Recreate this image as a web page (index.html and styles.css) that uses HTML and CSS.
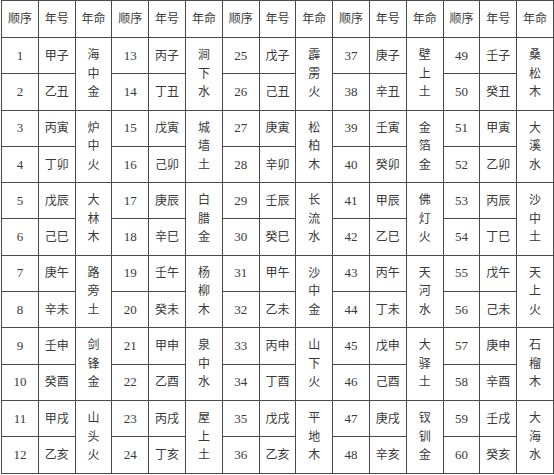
FILE: index.html
```html
<!DOCTYPE html>
<html lang="zh">
<head>
<meta charset="utf-8">
<title>六十甲子纳音表</title>
<link rel="stylesheet" href="styles.css">
</head>
<body>
<table class="nayin">
  <colgroup>
    <col><col><col><col><col><col><col><col><col><col><col><col><col><col><col>
  </colgroup>
  <thead>
    <tr class="head">
      <th>顺序</th><th>年号</th><th>年命</th>
      <th>顺序</th><th>年号</th><th>年命</th>
      <th>顺序</th><th>年号</th><th>年命</th>
      <th>顺序</th><th>年号</th><th>年命</th>
      <th>顺序</th><th>年号</th><th>年命</th>
    </tr>
  </thead>
  <tbody>
    <tr>
      <td class="num">1</td><td>甲子</td><td class="ming" rowspan="2">海<br>中<br>金</td>
      <td class="num">13</td><td>丙子</td><td class="ming" rowspan="2">涧<br>下<br>水</td>
      <td class="num">25</td><td>戊子</td><td class="ming" rowspan="2">霹<br>雳<br>火</td>
      <td class="num">37</td><td>庚子</td><td class="ming" rowspan="2">壁<br>上<br>土</td>
      <td class="num">49</td><td>壬子</td><td class="ming" rowspan="2">桑<br>松<br>木</td>
    </tr>
    <tr>
      <td class="num">2</td><td>乙丑</td>
      <td class="num">14</td><td>丁丑</td>
      <td class="num">26</td><td>己丑</td>
      <td class="num">38</td><td>辛丑</td>
      <td class="num">50</td><td>癸丑</td>
    </tr>
    <tr>
      <td class="num">3</td><td>丙寅</td><td class="ming" rowspan="2">炉<br>中<br>火</td>
      <td class="num">15</td><td>戊寅</td><td class="ming" rowspan="2">城<br>墙<br>土</td>
      <td class="num">27</td><td>庚寅</td><td class="ming" rowspan="2">松<br>柏<br>木</td>
      <td class="num">39</td><td>壬寅</td><td class="ming" rowspan="2">金<br>箔<br>金</td>
      <td class="num">51</td><td>甲寅</td><td class="ming" rowspan="2">大<br>溪<br>水</td>
    </tr>
    <tr>
      <td class="num">4</td><td>丁卯</td>
      <td class="num">16</td><td>己卯</td>
      <td class="num">28</td><td>辛卯</td>
      <td class="num">40</td><td>癸卯</td>
      <td class="num">52</td><td>乙卯</td>
    </tr>
    <tr>
      <td class="num">5</td><td>戊辰</td><td class="ming" rowspan="2">大<br>林<br>木</td>
      <td class="num">17</td><td>庚辰</td><td class="ming" rowspan="2">白<br>腊<br>金</td>
      <td class="num">29</td><td>壬辰</td><td class="ming" rowspan="2">长<br>流<br>水</td>
      <td class="num">41</td><td>甲辰</td><td class="ming" rowspan="2">佛<br>灯<br>火</td>
      <td class="num">53</td><td>丙辰</td><td class="ming" rowspan="2">沙<br>中<br>土</td>
    </tr>
    <tr>
      <td class="num">6</td><td>己巳</td>
      <td class="num">18</td><td>辛巳</td>
      <td class="num">30</td><td>癸巳</td>
      <td class="num">42</td><td>乙巳</td>
      <td class="num">54</td><td>丁巳</td>
    </tr>
    <tr>
      <td class="num">7</td><td>庚午</td><td class="ming" rowspan="2">路<br>旁<br>土</td>
      <td class="num">19</td><td>壬午</td><td class="ming" rowspan="2">杨<br>柳<br>木</td>
      <td class="num">31</td><td>甲午</td><td class="ming" rowspan="2">沙<br>中<br>金</td>
      <td class="num">43</td><td>丙午</td><td class="ming" rowspan="2">天<br>河<br>水</td>
      <td class="num">55</td><td>戊午</td><td class="ming" rowspan="2">天<br>上<br>火</td>
    </tr>
    <tr>
      <td class="num">8</td><td>辛未</td>
      <td class="num">20</td><td>癸未</td>
      <td class="num">32</td><td>乙未</td>
      <td class="num">44</td><td>丁未</td>
      <td class="num">56</td><td>己未</td>
    </tr>
    <tr>
      <td class="num">9</td><td>壬申</td><td class="ming" rowspan="2">剑<br>锋<br>金</td>
      <td class="num">21</td><td>甲申</td><td class="ming" rowspan="2">泉<br>中<br>水</td>
      <td class="num">33</td><td>丙申</td><td class="ming" rowspan="2">山<br>下<br>火</td>
      <td class="num">45</td><td>戊申</td><td class="ming" rowspan="2">大<br>驿<br>土</td>
      <td class="num">57</td><td>庚申</td><td class="ming" rowspan="2">石<br>榴<br>木</td>
    </tr>
    <tr>
      <td class="num">10</td><td>癸酉</td>
      <td class="num">22</td><td>乙酉</td>
      <td class="num">34</td><td>丁酉</td>
      <td class="num">46</td><td>己酉</td>
      <td class="num">58</td><td>辛酉</td>
    </tr>
    <tr>
      <td class="num">11</td><td>甲戌</td><td class="ming" rowspan="2">山<br>头<br>火</td>
      <td class="num">23</td><td>丙戌</td><td class="ming" rowspan="2">屋<br>上<br>土</td>
      <td class="num">35</td><td>戊戌</td><td class="ming" rowspan="2">平<br>地<br>木</td>
      <td class="num">47</td><td>庚戌</td><td class="ming" rowspan="2">钗<br>钏<br>金</td>
      <td class="num">59</td><td>壬戌</td><td class="ming" rowspan="2">大<br>海<br>水</td>
    </tr>
    <tr>
      <td class="num">12</td><td>乙亥</td>
      <td class="num">24</td><td>丁亥</td>
      <td class="num">36</td><td>乙亥</td>
      <td class="num">48</td><td>辛亥</td>
      <td class="num">60</td><td>癸亥</td>
    </tr>
  </tbody>
</table>
</body>
</html>
```

FILE: styles.css
```css
html, body {
  margin: 0;
  padding: 0;
  background: #ffffff;
}

body {
  padding: 0 0 0 1px;
}

.nayin {
  border-collapse: collapse;
  table-layout: fixed;
  width: 552px;
  font-family: "Liberation Serif", "Noto Sans CJK SC", serif;
  color: #3a3a3a;
  font-size: 12px;
}

.nayin col {
  width: 36.8px;
}

.nayin th,
.nayin td {
  border: 1px solid #4a4a4a;
  padding: 0;
  text-align: center;
  vertical-align: middle;
  font-weight: normal;
  line-height: 14px;
}

.nayin .head {
  height: 37px;
}

.nayin tbody tr {
  height: 36.3px;
}

.nayin .num {
  font-size: 13px;
}

.nayin .ming {
  line-height: 18.5px;
}
```
